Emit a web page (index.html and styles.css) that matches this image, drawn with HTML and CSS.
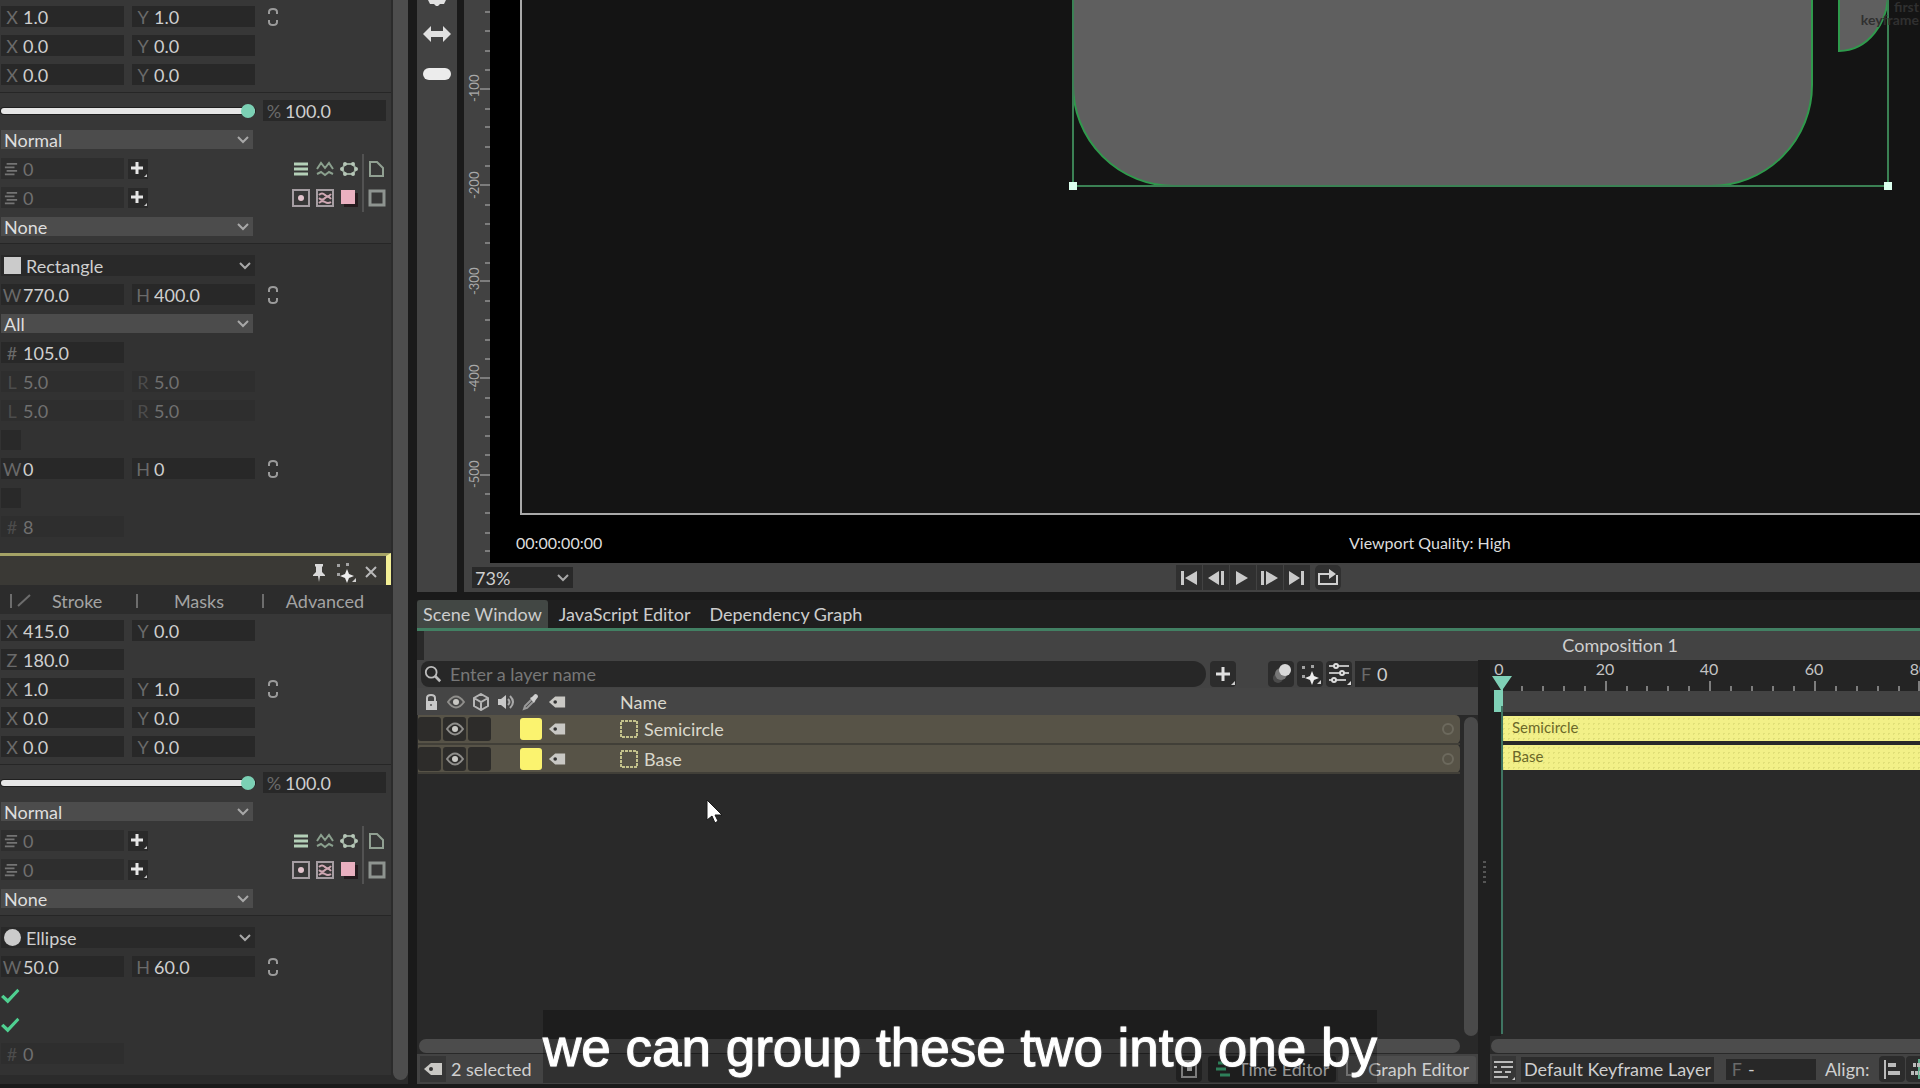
FILE: index.html
```html
<!DOCTYPE html>
<html lang="en">
<head>
<meta charset="utf-8">
<title>Composition 1</title>
<link rel="stylesheet" href="styles.css">
</head>
<body>
<svg class="defs" aria-hidden="true">
  <symbol id="i-link" viewBox="0 0 20 22"><path d="M6 8V6q0-3 4-3t4 3v2M6 14v2q0 3 4 3t4-3v-2" fill="none" stroke="#9b9b9b" stroke-width="2"/></symbol>
  <symbol id="i-chev" viewBox="0 0 12 8"><path d="M1 1l5 5 5-5" fill="none" stroke="#a8a8a8" stroke-width="2"/></symbol>
  <symbol id="i-lines" viewBox="0 0 16 16"><path d="M3 2h12M1 6h11M3 10h12M1 14h11" stroke="#868686" stroke-width="2"/></symbol>
  <symbol id="i-plus" viewBox="0 0 20 20"><path d="M9 3v12M3 9h12" stroke="#e6e6e6" stroke-width="3"/><path d="M16 18h3v-3z" fill="#c8c8c8"/></symbol>
  <symbol id="i-bars" viewBox="0 0 18 18"><path d="M2 4h14M2 9h14M2 14h14" stroke="#b4d0b8" stroke-width="3"/></symbol>
  <symbol id="i-wave" viewBox="0 0 18 18"><path d="M1 9l4-6 4 5 4-5 4 6M1 14l4-2 4 3 4-3 4 2" fill="none" stroke="#8ba08e" stroke-width="2"/></symbol>
  <symbol id="i-hex" viewBox="0 0 18 18"><path d="M5 4h8l3 5-3 5H5L2 9z" fill="none" stroke="#97a899" stroke-width="2"/><path d="M5 4v.1M13 4v.1M16 9v.1M13 14v.1M5 14v.1M2 9v.1" stroke="#b5c6b7" stroke-width="4" stroke-linecap="round"/></symbol>
  <symbol id="i-corner" viewBox="0 0 18 18"><path d="M2 2h7l6 6v8H2z" fill="none" stroke="#91a092" stroke-width="2"/></symbol>
  <symbol id="i-target" viewBox="0 0 18 18"><path d="M1 1h16v16H1z" fill="none" stroke="#a59da2" stroke-width="2"/><circle cx="9" cy="9" r="3" fill="#e2c3cc"/></symbol>
  <symbol id="i-noise" viewBox="0 0 18 18"><path d="M1 1h16v16H1z" fill="none" stroke="#a59da2" stroke-width="2"/><path d="M3 6q3-3 6 0t6-1M3 9q3 3 6 0t6 1M3 14q3-3 6-1t6 0" fill="none" stroke="#cfa8b3" stroke-width="2"/></symbol>
  <symbol id="i-pink" viewBox="0 0 18 18"><path d="M4 4h14v14H4z" fill="#251b1e"/><path d="M1 1h14v14H1z" fill="#eab0c0"/></symbol>
  <symbol id="i-frame" viewBox="0 0 18 18"><path d="M2 2h14v14H2z" fill="none" stroke="#8e9490" stroke-width="3"/></symbol>
  <symbol id="i-magic" viewBox="0 0 26 26"><path d="M5 5h3v3H5zM14 4h3v3h-3zM5 14h3v3H5z" fill="#a2a2a2"/><path d="M15 10l2 5 5 2-5 2-2 5-2-5-5-2 5-2z" fill="#ededed"/><path d="M20 23h4v-4z" fill="#d0d0d0"/></symbol>
  <symbol id="i-tag" viewBox="0 0 20 14"><path d="M8 1h11v12H8L1 7z" fill="#c9c8c4"/><circle cx="8" cy="7" r="2" fill="#333"/></symbol>
  <symbol id="i-eye" viewBox="0 0 18 14"><path d="M1 7q8-11 16 0q-8 11-16 0z" fill="none" stroke="#8f8e8b" stroke-width="2"/><circle cx="9" cy="7" r="3" fill="#c9c8c4"/></symbol>
  <symbol id="i-shape" viewBox="0 0 18 18"><path d="M1 1h16v16H1z" fill="none" stroke="#c4c28c" stroke-width="2" stroke-dasharray="3 1"/></symbol>
</svg>

<main class="app">
  <aside class="sidebar">
    <div class="panels">
      <section class="panel">
        <div class="group transform">
          <div class="row">
            <label class="field"><span>X</span><input value="1.0"></label><label class="field"><span>Y</span><input value="1.0"></label>
            <button class="mini" aria-label="Link scale"><svg><use href="#i-link"/></svg></button>
          </div>
          <div class="row"><label class="field"><span>X</span><input value="0.0"></label><label class="field"><span>Y</span><input value="0.0"></label></div>
          <div class="row"><label class="field"><span>X</span><input value="0.0"></label><label class="field"><span>Y</span><input value="0.0"></label></div>
        </div>
        <div class="group">
          <div class="row"><input type="range" class="slider" value="100" aria-label="Opacity"><label class="field"><span>%</span><input value="100.0"></label></div>
          <div class="row"><div class="pick"><select aria-label="Blend mode"><option>Normal</option></select><svg><use href="#i-chev"/></svg></div></div>
          <div class="row">
            <label class="field off"><svg><use href="#i-lines"/></svg><input value="0" disabled aria-label="Filters"></label>
            <button class="add" aria-label="Add filter"><svg><use href="#i-plus"/></svg></button>
            <div class="tools"><button aria-label="Bars"><svg><use href="#i-bars"/></svg></button><button aria-label="Wave"><svg><use href="#i-wave"/></svg></button><button aria-label="Polygon"><svg><use href="#i-hex"/></svg></button><button class="split" aria-label="Corner"><svg><use href="#i-corner"/></svg></button></div>
          </div>
          <div class="row">
            <label class="field off"><svg><use href="#i-lines"/></svg><input value="0" disabled aria-label="Effects"></label>
            <button class="add" aria-label="Add effect"><svg><use href="#i-plus"/></svg></button>
            <div class="tools"><button aria-label="Glow"><svg><use href="#i-target"/></svg></button><button aria-label="Noise"><svg><use href="#i-noise"/></svg></button><button aria-label="Shadow"><svg><use href="#i-pink"/></svg></button><button class="split" aria-label="Frame"><svg><use href="#i-frame"/></svg></button></div>
          </div>
          <div class="row"><div class="pick"><select aria-label="Matte"><option>None</option></select><svg><use href="#i-chev"/></svg></div></div>
        </div>
        <div class="group shape">
          <div class="row"><div class="pick dark"><i class="glyph"></i><select aria-label="Generator"><option>Rectangle</option></select><svg><use href="#i-chev"/></svg></div></div>
          <div class="row">
            <label class="field"><span>W</span><input value="770.0"></label><label class="field"><span>H</span><input value="400.0"></label>
            <button class="mini" aria-label="Link size"><svg><use href="#i-link"/></svg></button>
          </div>
          <div class="row"><div class="pick"><select aria-label="Corners"><option>All</option></select><svg><use href="#i-chev"/></svg></div></div>
          <div class="row"><label class="field"><span>#</span><input value="105.0"></label></div>
          <div class="row"><label class="field off"><span>L</span><input value="5.0" disabled></label><label class="field off"><span>R</span><input value="5.0" disabled></label></div>
          <div class="row"><label class="field off"><span>L</span><input value="5.0" disabled></label><label class="field off"><span>R</span><input value="5.0" disabled></label></div>
          <div class="row"><input type="checkbox" class="tick" aria-label="Continuous corners"></div>
          <div class="row">
            <label class="field"><span>W</span><input value="0"></label><label class="field"><span>H</span><input value="0"></label>
            <button class="mini" aria-label="Link divisions"><svg><use href="#i-link"/></svg></button>
          </div>
          <div class="row"><input type="checkbox" class="tick" aria-label="Edge arcs"></div>
          <div class="row"><label class="field off"><span>#</span><input value="8" disabled></label></div>
        </div>
      </section>

      <section class="panel">
        <header class="panel-head">
          <button aria-label="Pin"><svg viewBox="0 0 26 26"><path d="M9 5h8v2l-1 1v5l3 3v1h-5l-1 6-1-6H7v-1l3-3V8L9 7z" fill="#d9d9d9"/></svg></button>
          <button aria-label="Presets"><svg><use href="#i-magic"/></svg></button>
          <button aria-label="Close"><svg viewBox="0 0 26 26"><path d="M8 8l10 10M18 8L8 18" stroke="#b9b9b9" stroke-width="2"/></svg></button>
        </header>
        <nav class="panel-tabs">
          <button><svg viewBox="0 0 16 14"><path d="M2 12L14 1" stroke="#6d6d6d" stroke-width="2"/></svg>Stroke</button>
          <button>Masks</button>
          <button>Advanced</button>
        </nav>
        <div class="group transform">
          <div class="row"><label class="field"><span>X</span><input value="415.0"></label><label class="field"><span>Y</span><input value="0.0"></label></div>
          <div class="row"><label class="field"><span>Z</span><input value="180.0"></label></div>
          <div class="row">
            <label class="field"><span>X</span><input value="1.0"></label><label class="field"><span>Y</span><input value="1.0"></label>
            <button class="mini" aria-label="Link scale"><svg><use href="#i-link"/></svg></button>
          </div>
          <div class="row"><label class="field"><span>X</span><input value="0.0"></label><label class="field"><span>Y</span><input value="0.0"></label></div>
          <div class="row"><label class="field"><span>X</span><input value="0.0"></label><label class="field"><span>Y</span><input value="0.0"></label></div>
        </div>
        <div class="group">
          <div class="row"><input type="range" class="slider" value="100" aria-label="Opacity"><label class="field"><span>%</span><input value="100.0"></label></div>
          <div class="row"><div class="pick"><select aria-label="Blend mode"><option>Normal</option></select><svg><use href="#i-chev"/></svg></div></div>
          <div class="row">
            <label class="field off"><svg><use href="#i-lines"/></svg><input value="0" disabled aria-label="Filters"></label>
            <button class="add" aria-label="Add filter"><svg><use href="#i-plus"/></svg></button>
            <div class="tools"><button aria-label="Bars"><svg><use href="#i-bars"/></svg></button><button aria-label="Wave"><svg><use href="#i-wave"/></svg></button><button aria-label="Polygon"><svg><use href="#i-hex"/></svg></button><button class="split" aria-label="Corner"><svg><use href="#i-corner"/></svg></button></div>
          </div>
          <div class="row">
            <label class="field off"><svg><use href="#i-lines"/></svg><input value="0" disabled aria-label="Effects"></label>
            <button class="add" aria-label="Add effect"><svg><use href="#i-plus"/></svg></button>
            <div class="tools"><button aria-label="Glow"><svg><use href="#i-target"/></svg></button><button aria-label="Noise"><svg><use href="#i-noise"/></svg></button><button aria-label="Shadow"><svg><use href="#i-pink"/></svg></button><button class="split" aria-label="Frame"><svg><use href="#i-frame"/></svg></button></div>
          </div>
          <div class="row"><div class="pick"><select aria-label="Matte"><option>None</option></select><svg><use href="#i-chev"/></svg></div></div>
        </div>
        <div class="group shape">
          <div class="row"><div class="pick dark"><i class="glyph round"></i><select aria-label="Generator"><option>Ellipse</option></select><svg><use href="#i-chev"/></svg></div></div>
          <div class="row">
            <label class="field"><span>W</span><input value="50.0"></label><label class="field"><span>H</span><input value="60.0"></label>
            <button class="mini" aria-label="Link size"><svg><use href="#i-link"/></svg></button>
          </div>
          <div class="row"><input type="checkbox" class="tick" checked aria-label="Semicircle"></div>
          <div class="row"><input type="checkbox" class="tick" checked aria-label="Closed"></div>
          <div class="row"><label class="field off"><span>#</span><input value="0" disabled></label></div>
        </div>
      </section>
    </div>
    <div class="side-scroll"></div>
  </aside>

  <section class="stage">
    <div class="toolbox">
      <button aria-label="Move tool"><svg viewBox="0 0 30 6"><path d="M6 0h18l-2 4h-4l-3 3-3-3H8z" fill="#e0e0e0"/></svg></button>
      <button aria-label="Stretch tool"><svg viewBox="0 0 30 24"><path d="M1 12l8-8v5h12V4l8 8-8 8v-5H9v5z" fill="#e0e0e0"/></svg></button>
      <button aria-label="Capsule tool"><svg viewBox="0 0 30 24"><rect x="1" y="6" width="28" height="12" rx="6" fill="#ececec"/></svg></button>
    </div>
    <div class="viewer">
      <div class="view-area">
        <svg class="ruler-v">
          <path class="minor" d="M21 12h5M21 31h5M21 51h5M21 70h5M21 109h5M21 127h5M21 147h5M21 166h5M21 205h5M21 224h5M21 243h5M21 263h5M21 301h5M21 320h5M21 340h5M21 359h5M21 398h5M21 417h5M21 436h5M21 455h5M21 494h5M21 513h5M21 533h5M21 551h5"/>
          <path class="major" d="M16 89h10M16 185h10M16 281h10M16 378h10M16 475h10"/>
          <g><text transform="translate(15 102) rotate(-90)">-100</text><text transform="translate(15 199) rotate(-90)">-200</text><text transform="translate(15 295) rotate(-90)">-300</text><text transform="translate(15 392) rotate(-90)">-400</text><text transform="translate(15 488) rotate(-90)">-500</text></g>
        </svg>
        <svg class="canvas">
          <rect x="31" y="-20" width="3000" height="534" fill="#141414" stroke="#a9a9a9" stroke-width="2"/>
          <rect x="583" y="-214" width="739" height="400" rx="101" fill="#5f5f5f" stroke="#2f9a4c" stroke-width="2"/>
          <path d="M1349-10V51A49 58 0 0 0 1398-10" fill="#5f5f5f" stroke="#2f9a4c" stroke-width="2"/>
          <path d="M583-10V186H1398V-10" fill="none" stroke="#3b8154" stroke-width="2"/>
          <rect x="579" y="182" width="8" height="8" fill="#dcffee"/>
          <rect x="1394" y="182" width="8" height="8" fill="#dcffee"/>
          <text class="mark" x="1429" y="12" text-anchor="end">first</text>
          <text class="mark" x="1429" y="25" text-anchor="end">keyframe</text>
          <text class="info" x="26" y="549">00:00:00:00</text>
          <text class="info" x="859" y="549">Viewport Quality: High</text>
        </svg>
      </div>
      <div class="view-bar">
        <div class="pick dark zoom"><select aria-label="Zoom"><option>73%</option></select><svg><use href="#i-chev"/></svg></div>
        <div class="transport">
          <button aria-label="First frame"><svg viewBox="0 0 26 24"><path d="M5 5h3v14H5zM21 5v14L9 12z"/></svg></button>
          <button aria-label="Previous frame"><svg viewBox="0 0 26 24"><path d="M16 5v14L5 12zM18 5h3v14h-3z"/></svg></button>
          <button aria-label="Play"><svg viewBox="0 0 26 24"><path d="M6 5v14l12-7z"/></svg></button>
          <button aria-label="Next frame"><svg viewBox="0 0 26 24"><path d="M4 5h3v14H4zM9 5v14l12-7z"/></svg></button>
          <button aria-label="Last frame"><svg viewBox="0 0 26 24"><path d="M5 5v14l11-7zM17 5h3v14h-3z"/></svg></button>
        </div>
        <button class="loop" aria-label="Loop"><svg viewBox="0 0 26 24"><path d="M11 8H4v10h18V9" fill="none" stroke="#d0d0d0" stroke-width="2"/><path d="M10 7h4V3l7 5-7 5V9h-4z" fill="#d0d0d0"/></svg></button>
      </div>
    </div>
  </section>

  <section class="scene">
    <nav class="tabs"><button class="on">Scene Window</button><button>JavaScript Editor</button><button>Dependency Graph</button></nav>
    <div class="comp-bar"><button>Composition 1</button></div>
    <div class="split-view">
      <div class="layers">
        <div class="search-row">
          <label class="search"><svg viewBox="0 0 20 20"><circle cx="8" cy="8" r="6" fill="none" stroke="#bcbcbc" stroke-width="2"/><path d="M12 12l6 6" stroke="#bcbcbc" stroke-width="3"/></svg><input placeholder="Enter a layer name" aria-label="Enter a layer name"></label>
          <button class="tool" aria-label="Add"><svg viewBox="0 0 26 26"><path d="M13 6v14M6 13h14" stroke="#e0e0e0" stroke-width="3"/><path d="M21 24h4v-4z" fill="#ccc"/></svg></button>
          <div class="scene-tools">
            <button class="tool" aria-label="Motion blur"><svg viewBox="0 0 26 26"><circle cx="10" cy="17" r="5" fill="#4b4b4b"/><circle cx="13" cy="13" r="6" fill="#777"/><circle cx="17" cy="9" r="6" fill="#d8d8d8"/></svg></button>
            <button class="tool" aria-label="Presets"><svg><use href="#i-magic"/></svg></button>
            <button class="tool" aria-label="Settings"><svg viewBox="0 0 26 26"><path d="M3 5h20M3 12h20M3 19h17" stroke="#bcbcbc" stroke-width="2"/><circle cx="10" cy="5" r="2" fill="#333" stroke="#ddd" stroke-width="2"/><circle cx="16" cy="12" r="2" fill="#333" stroke="#ddd" stroke-width="2"/><circle cx="8" cy="19" r="2" fill="#333" stroke="#ddd" stroke-width="2"/><path d="M21 24h4v-4z" fill="#ddd"/></svg></button>
          </div>
          <label class="field frame"><span>F</span><input value="0"></label>
        </div>
        <div class="layer-body">
          <table>
            <colgroup><col class="c"><col class="c"><col class="c"><col class="c"><col class="c"><col class="t"><col><col class="r"></colgroup>
            <thead><tr>
              <th><svg viewBox="0 0 18 18"><path d="M5 9V5q0-3 4-3t4 3v4" fill="none" stroke="#c2c2c2" stroke-width="2"/><path d="M4 8h11v9H4z" fill="#c9c9c9"/><circle cx="9" cy="12" r="1" fill="#555"/></svg></th>
              <th><svg><use href="#i-eye"/></svg></th>
              <th><svg viewBox="0 0 18 18"><path d="M9 1l7 4v8l-7 4-7-4V5zM2 5l7 4 7-4M9 9v8" fill="none" stroke="#b5b5b5" stroke-width="2"/></svg></th>
              <th><svg viewBox="0 0 18 18"><path d="M1 6h3l5-4v14l-5-4H1z" fill="#c9c9c9"/><path d="M11 6q3 3 0 6M13 3q6 6 0 12" fill="none" stroke="#a9a9a9" stroke-width="2"/></svg></th>
              <th><svg viewBox="0 0 18 18"><path d="M2 16l1-3 7-7 2 2-7 7z" fill="none" stroke="#999" stroke-width="2"/><path d="M8 5l2-1 3-3q3 0 3 3l-3 4-1 2z" fill="#d0d0d0"/></svg></th>
              <th><svg><use href="#i-tag"/></svg></th>
              <th class="name">Name</th><th></th>
            </tr></thead>
            <tbody>
              <tr><td><i class="cell"></i></td><td><i class="cell"><svg><use href="#i-eye"/></svg></i></td><td><i class="cell"></i></td><td></td><td><i class="swatch"></i></td><td><svg><use href="#i-tag"/></svg></td><td class="name"><svg><use href="#i-shape"/></svg>Semicircle</td><td><i class="ring"></i></td></tr>
              <tr><td><i class="cell"></i></td><td><i class="cell"><svg><use href="#i-eye"/></svg></i></td><td><i class="cell"></i></td><td></td><td><i class="swatch"></i></td><td><svg><use href="#i-tag"/></svg></td><td class="name"><svg><use href="#i-shape"/></svg>Base</td><td><i class="ring"></i></td></tr>
            </tbody>
          </table>
          <div class="v-col"><div class="v-scroll"></div></div>
          <svg class="pointer" viewBox="0 0 18 25"><path d="M2 1v20l5-4 3 7 3-2-3-6h7z" fill="#fff" stroke="#1a1a1a"/></svg>
        </div>
        <div class="h-track"><div class="h-scroll"></div></div>
        <footer class="status">
          <button class="tag" aria-label="Filter by tag"><svg><use href="#i-tag"/></svg></button><span>2 selected</span>
          <div class="modes">
            <button class="tool" aria-label="Solo"><svg viewBox="0 0 26 26"><path d="M6 5h14v16H6z" fill="none" stroke="#aaa" stroke-width="2"/><path d="M11 11h5v4h-5z" fill="#ccc"/></svg></button>
            <button class="mode on"><svg viewBox="0 0 20 20"><path d="M5 4h10M3 10h10M7 16h10" stroke="#3fae7b" stroke-width="3"/></svg>Time Editor</button>
            <button class="mode"><svg viewBox="0 0 20 20"><path d="M4 2v14h14" fill="none" stroke="#999" stroke-width="2"/></svg>Graph Editor</button>
          </div>
        </footer>
      </div>
      <div class="gutter"><i></i><i></i><i></i><i></i><i></i></div>
      <div class="timeline">
        <svg class="ruler-h">
          <rect width="100%" height="31" fill="#242424"/>
          <rect x="11" y="31" width="100%" height="21" fill="#434343"/>
          <path class="minor" d="M32 26v5M53 26v5M74 26v5M95 26v5M137 26v5M157 26v5M178 26v5M199 26v5M241 26v5M262 26v5M283 26v5M304 26v5M346 26v5M367 26v5M388 26v5M409 26v5"/>
          <path class="major" d="M116 21v10M220 21v10M325 21v10M429 21v10"/>
          <text x="9" y="15">0</text><text x="115" y="15">20</text><text x="219" y="15">40</text><text x="324" y="15">60</text><text x="429" y="15">80</text>
        </svg>
        <div class="tracks"><div class="clip">Semicircle</div><div class="clip">Base</div></div>
        <div class="h-track"><div class="h-scroll"></div></div>
        <footer class="status">
          <button class="tag" aria-label="Keyframe layers"><svg viewBox="0 0 24 24"><path d="M2 5h19M2 10h3M9 10h12M2 15h8M13 15h6M2 20h14" stroke="#bbb" stroke-width="2"/><path d="M20 23h3v-3z" fill="#ccc"/></svg></button>
          <button class="layer-name">Default Keyframe Layer</button>
          <label class="field key"><span>F</span><input value="-"></label>
          <span class="align">Align:</span>
          <button class="tool" aria-label="Align left"><svg viewBox="0 0 26 26"><path d="M6 4v19" stroke="#bbb" stroke-width="2"/><path d="M9 9h8M9 17h12" stroke="#bbb" stroke-width="4"/></svg></button>
          <button class="tool" aria-label="Align center"><svg viewBox="0 0 26 26"><path d="M13 3v20" stroke="#5fae8d" stroke-width="2"/><path d="M7 9h12M5 17h16" stroke="#bbb" stroke-width="4" stroke-dasharray="3 1"/></svg></button>
        </footer>
        <div class="playhead"><svg viewBox="0 0 20 38"><path d="M0 0h20L11 13v23H2V14h7z" fill="#7fd0b6"/></svg></div>
      </div>
    </div>
  </section>
  <p class="caption">we can group these two into one by</p>
</main>
</body>
</html>
```
FILE: styles.css
```css
* { box-sizing: border-box; }
body { margin: 0; background: #1a1a1a; color: #cfcfcf; font: 18px/22px Lato, "Liberation Sans", sans-serif; overflow: hidden; }
.defs { position: absolute; width: 0; height: 0; }
button, input, select { font: inherit; color: inherit; border: 0; margin: 0; padding: 0; background: none; outline: 0; border-radius: 0; }
button { display: flex; align-items: center; justify-content: center; white-space: nowrap; }
svg { display: block; flex: none; }

.app {
  position: relative; display: grid; height: 100vh; padding-bottom: 4px; row-gap: 8px; column-gap: 9px;
  grid-template: minmax(0, 592fr) minmax(0, 484fr) / 408px minmax(0, 1fr);
}

/* property panels */
.sidebar { grid-row: 1 / 3; display: flex; gap: 2px; overflow: hidden; background: #2b2b2b; }
.panels { flex: 1; }
.side-scroll { width: 15px; height: calc(100% - 4px); background: #4d4d4d; border-radius: 0 0 8px 8px; }
.group { padding: 3px 0 2px 1px; background: #373737; border-top: 1px solid #262626; }
.group.transform { padding-top: 2px; padding-bottom: 3px; border-top: 0; }
.group.shape { padding: 7px 0 7px 1px; background: #323232; }
.panel:first-child .shape { padding-bottom: 12px; }
.row { display: flex; align-items: center; gap: 8px; height: 29px; }
.field { display: flex; align-items: center; width: 123px; height: 21px; background: #282828; }
.field span { width: 22px; text-align: center; color: #6a6a6a; flex: none; }
.field svg { width: 14px; height: 14px; margin: 0 5px 0 3px; opacity: .8; }
.field input { flex: 1; min-width: 0; height: 21px; }
.off { background: #2e2e2e; }
.off span { color: #4c4c4c; }
.off input { color: #707070; }
.mini, .mini svg { width: 20px; height: 22px; }
.add { width: 20px; height: 20px; background: #2a2a2a; margin-left: -4px; }
.add svg { width: 20px; height: 20px; }
.tools { display: flex; gap: 6px; margin-left: auto; padding-right: 5px; height: 29px; align-items: center; }
.tools svg { width: 18px; height: 18px; }
.tools .split { height: 29px; margin-left: -2px; padding-left: 4px; border-left: 2px solid #525252; }
.slider { appearance: none; width: 254px; height: 16px; }
.slider::-webkit-slider-runnable-track { height: 6px; background: #e6e6e6; border-radius: 3px; box-shadow: 0 0 0 1px #1f1f1f; }
.slider::-webkit-slider-thumb { appearance: none; width: 14px; height: 14px; margin-top: -4px; border-radius: 7px; background: #7bd0b4; }
.pick { display: flex; align-items: center; width: 252px; height: 19px; background: #4c4c4c; color: #dedede; }
.pick select { appearance: none; flex: 1; height: 22px; padding-left: 3px; }
.pick svg { width: 12px; height: 8px; margin-right: 4px; }
.pick.dark { width: 254px; height: 21px; background: #292929; color: #cfcfcf; }
.glyph { width: 17px; height: 17px; margin: 0 2px 0 3px; background: #cbcbcb; }
.round { border-radius: 9px; }
.tick { appearance: none; width: 20px; height: 20px; background: #292929; }
.tick:checked { background: #4fd091; clip-path: polygon(0 58%, 12% 46%, 34% 66%, 82% 16%, 92% 28%, 34% 90%); }
.panel-head { display: flex; justify-content: flex-end; height: 32px; padding: 3px 2px 0 0; background: #3a3935; border-top: 3px solid #a5a366; border-right: 5px solid #f3ef96; }
.panel-head svg { width: 26px; height: 26px; }
.panel-tabs { display: flex; height: 29px; padding: 3px 0 0 10px; background: #2c2c2c; color: #a3a3a3; }
.panel-tabs button { width: 126px; padding-right: 24px; justify-content: flex-end; }
.panel-tabs button::before { content: ""; width: 2px; height: 14px; background: #6d6d6d; margin-right: auto; }
.panel-tabs button:first-child { justify-content: flex-start; padding: 0; }
.panel-tabs button:first-child::before { margin-right: 0; }
.panel-tabs button:first-child svg { width: 16px; height: 14px; margin: 0 20px 0 4px; }
.panel-tabs button:nth-child(2) { padding-right: 38px; }

/* viewer */
.stage { display: flex; gap: 7px; }
.toolbox { width: 40px; background: #424242; display: flex; flex-direction: column; align-items: center; gap: 16px; }
.toolbox svg { width: 30px; height: 24px; }
.toolbox button:first-child svg { height: 6px; }
.viewer { flex: 1; min-width: 0; display: flex; flex-direction: column; background: #424242; }
.view-area { flex: 1; min-height: 0; display: flex; }
.ruler-v { width: 26px; height: 100%; font-size: 13px; fill: #a9a9a9; }
.minor, .major { fill: none; stroke: #7d7d7d; stroke-width: 2; }
.canvas { flex: 1; min-width: 0; height: 100%; background: #000; }
.info { font-size: 16px; fill: #dcdcdc; }
.mark { font-size: 14px; font-weight: 700; fill: #303030; }
.view-bar { display: flex; align-items: center; height: 29px; padding-left: 8px; }
.pick.zoom { width: 101px; }
.transport { display: flex; gap: 1px; margin-left: 603px; }
.transport button, .loop { width: 26px; height: 25px; background: #303030; }
.transport svg, .loop svg { width: 26px; height: 24px; fill: #cacaca; }
.loop { margin-left: 5px; border-radius: 5px; }

/* scene window */
.scene { display: flex; flex-direction: column; min-width: 0; background: #292929; }
.tabs { display: flex; height: 31px; background: #1f1f1f; border-bottom: 3px solid #428063; gap: 3px; }
.tabs button { padding: 0 8px; color: #cdcdcd; }
.tabs .on { background: #424744; border-radius: 3px 3px 0 0; padding: 0 6px; }
.comp-bar { display: flex; justify-content: flex-end; height: 29px; margin-left: 7px; background: #434343; padding: 0 242px 2px 0; }
.split-view { flex: 1; min-height: 0; display: grid; grid-template-columns: minmax(0, 1061fr) 12px minmax(0, 430fr); }
.layers, .timeline { display: flex; flex-direction: column; min-width: 0; min-height: 0; }
.search-row { display: flex; align-items: center; height: 28px; padding-left: 4px; background: #434343; }
.search { flex: 1; display: flex; align-items: center; gap: 8px; height: 26px; padding-left: 3px; margin-right: 4px; background: #272727; border-radius: 8px 13px 13px 8px; }
.search svg { width: 18px; height: 18px; }
.search input { flex: 1; }
.search input::placeholder { color: #777; opacity: 1; }
.tool { width: 26px; height: 26px; background: #2c2c2c; border-radius: 4px; }
.tool svg { width: 26px; height: 26px; }
.scene-tools { display: flex; gap: 3px; margin-left: 32px; }
.field.frame { width: 123px; height: 26px; margin: 0 0 0 3px; }
.layer-body { position: relative; flex: 1; min-height: 0; display: flex; align-items: stretch; padding-left: 1px; background: linear-gradient(#454545 27px, transparent 27px); }
table { flex: 1; width: 0; height: max-content; table-layout: fixed; border-collapse: collapse; }
.c { width: 25px; } .t { width: 27px; } .r { width: 18px; }
th { height: 27px; padding: 0; font-weight: 400; background: #454545; }
th svg, td svg { margin: 0 auto; width: 18px; height: 18px; }
td { height: 29px; padding: 0; background: #575347; border-bottom: 2px solid #413f38; }
td:last-child { border-radius: 0 5px 5px 0; }
.cell { display: flex; align-items: center; height: 24px; margin-right: 2px; background: #2d2c2a; border-radius: 3px; }
.swatch { display: block; width: 22px; height: 22px; margin: 0 auto; background: #fbf36f; border-radius: 3px; }
.ring { display: block; width: 12px; height: 12px; border: 2px solid #6c695d; border-radius: 6px; }
th.name, td.name { padding-left: 50px; text-align: left; color: #dad8cc; }
.name svg { display: inline-block; margin: 0 6px 0 0; vertical-align: -2px; }
.v-col { width: 18px; padding: 29px 0 0 4px; display: flex; flex-direction: column; }
.v-scroll { flex: 1; background: #4a4a4a; border-radius: 7px; }
.pointer { position: absolute; left: 288px; top: 111px; width: 18px; height: 25px; }
.h-track { padding: 3px 18px 1px 2px; }
.h-scroll { height: 14px; background: #4c4c4c; border-radius: 7px; }
.status { display: flex; align-items: center; height: 30px; background: #434343; padding-left: 3px; }
.tag { width: 26px; height: 26px; background: #363636; margin-right: 5px; }
.tag svg { width: 20px; height: 20px; }
.modes { display: flex; align-items: center; margin-left: auto; padding-right: 2px; gap: 2px; }
.mode { height: 26px; padding: 0 7px 0 5px; gap: 5px; background: #4e4e4e; border-radius: 3px; }
.mode.on { background: #292929; margin-left: 4px; }
.mode svg { width: 20px; height: 20px; }
.gutter { background: #202020; display: flex; flex-direction: column; justify-content: center; align-items: center; gap: 3px; }
.gutter i { width: 3px; height: 2px; background: #555; }
.timeline { position: relative; overflow: hidden; }
.ruler-h { width: 100%; height: 52px; background: #1f1f1f; font-size: 16px; fill: #c3c3c3; text-anchor: middle; }
.tracks { flex: 1; padding-top: 4px; border-left: 11px solid #1f1f1f; }
.clip { height: 25px; margin-bottom: 4px; padding-left: 11px; color: #6b6829; font-size: 15px; line-height: 23px; background: radial-gradient(circle, #e0df78 1px, transparent 1px) 0 0 / 5px 5px, #f2f088; border-radius: 3px 0 0 3px; }
.timeline .h-track { padding: 3px 0 1px 1px; }
.timeline .h-scroll { border-radius: 7px 0 0 7px; }
.timeline .status { padding-left: 2px; overflow: hidden; }
.timeline .status .tool { flex: none; margin-right: 1px; }
.timeline .tag svg { width: 24px; height: 24px; }
.layer-name { height: 25px; padding: 0 3px; background: #2c2c2c; }
.field.key { width: 90px; margin: 0 9px 0 12px; }
.align { margin-right: 9px; }
.playhead { position: absolute; left: 2px; top: 16px; bottom: 50px; width: 20px; }
.playhead::after { content: ""; position: absolute; left: 9px; top: 30px; bottom: 0; width: 2px; background: #3f7562; }
.playhead svg { width: 20px; height: 38px; }

.caption {
  position: absolute; left: 0; right: 0; bottom: 5px; width: max-content; margin: 0 auto; padding-top: 2px;
  background: rgba(0, 0, 0, .27); color: #fff; font: 53px/71px "Liberation Sans", Arial, sans-serif; white-space: nowrap;
  -webkit-text-stroke: 1px #fff; text-shadow: 0 0 2px #777, 0 0 2px #777;
}
```
